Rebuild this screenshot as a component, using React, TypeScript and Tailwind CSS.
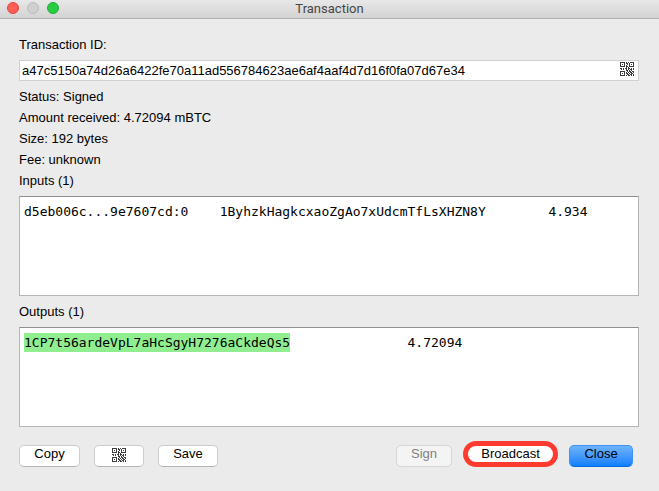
import type { ReactNode } from "react";

interface TxDetails {
  id: string;
  info: string[];
  inputs: { prevout: string; address: string; value: string }[];
  outputs: { address: string; value: string; isMine: boolean }[];
}

const TX: TxDetails = {
  id: "a47c5150a74d26a6422fe70a11ad556784623ae6af4aaf4d7d16f0fa07d67e34",
  info: ["Status: Signed", "Amount received: 4.72094 mBTC", "Size: 192 bytes", "Fee: unknown"],
  inputs: [{ prevout: "d5eb006c...9e7607cd:0", address: "1ByhzkHagkcxaoZgAo7xUdcmTfLsXHZN8Y", value: "4.934" }],
  outputs: [{ address: "1CP7t56ardeVpL7aHcSgyH7276aCkdeQs5", value: "4.72094", isMine: true }],
};

const QR_ROWS = [
  "#####.#.#.####",
  "#...#.##.#...#",
  "#.#.#..#.#.#.#",
  "#...#.#..#...#",
  "#####.##.#####",
  "......#.#.....",
  "##.#.##.##.#.#",
  ".#.#..#.#.##.#",
  "......##.#.#..",
  "#####..#.##.##",
  "#...#.#.#.##.#",
  "#.#.#.##.#.##.",
  "#...#..##.##.#",
  "#####.#.##.#.#",
];

const QrIcon = () => (
  <svg viewBox="0 0 14 14" className="h-3.5 w-3.5" shapeRendering="crispEdges" aria-hidden="true">
    {QR_ROWS.flatMap((row, y) =>
      [...row].map((c, x) => c === "#" && <rect key={`${x}-${y}`} x={x} y={y} width="1" height="1" fill="#3c3c3c" />)
    )}
  </svg>
);

const BUTTON = "flex h-[22px] items-center justify-center rounded-[5px] border leading-4";
const PLAIN = "border-[#cdcdcd] border-b-[#b4b4b4] bg-white";

const TextPane = ({ label, children }: { label: string; children: ReactNode }) => (
  <section>
    <h2 className="leading-[21px]">{label}</h2>
    <div
      role="textbox"
      aria-label={label}
      aria-multiline="true"
      aria-readonly="true"
      className="mt-[5px] h-[100px] overflow-auto border border-[#b5b5b5] border-t-[#8f8f8f] bg-white px-1 py-[5px] font-['DejaVu_Sans_Mono',monospace] leading-[19px] whitespace-pre"
    >
      {children}
    </div>
  </section>
);

export default function App() {
  return (
    <div className="flex min-h-screen flex-col bg-[#ebebeb] font-['Liberation_Sans',Arial,sans-serif] text-[13px] text-black">
      {/* Title bar */}
      <header className="grid h-[19px] grid-cols-[1fr_auto_1fr] items-center border-b border-[#b1b1b1] bg-linear-to-b from-[#e8e8e8] to-[#d3d3d3]">
        <div className="flex gap-2 pb-[3px] pl-[7px]">
          <button aria-label="Close window" className="h-3 w-3 rounded-full border border-[#e2463f] bg-[#ff5f57]" />
          <button aria-label="Minimize window" disabled className="h-3 w-3 rounded-full border border-[#bcbcbc] bg-[#d0d0d0]" />
          <button aria-label="Zoom window" className="h-3 w-3 rounded-full border border-[#1fae33] bg-[#28cd41]" />
        </div>
        <h1 className="font-[Roboto,sans-serif] leading-4 text-[#464646]">Transaction</h1>
      </header>

      <main className="flex flex-col gap-[5px] px-5 pt-[15px] pb-6 pl-[19px]">
        <label htmlFor="txid" className="leading-[21px]">Transaction ID:</label>
        <div className="flex h-[21px] items-center border border-[#d0d0d0] bg-white pr-1">
          <input id="txid" readOnly value={TX.id} className="min-w-0 flex-1 px-0.5 leading-4 outline-none" />
          <button aria-label="Show transaction as QR code" className="pb-1">
            <QrIcon />
          </button>
        </div>

        <div>
          {TX.info.map(line => (
            <p key={line} className="leading-[21px]">{line}</p>
          ))}
          <TextPane label={`Inputs (${TX.inputs.length})`}>
            {TX.inputs.map(i => (
              <div key={i.prevout}>{`${i.prevout}    ${i.address}        ${i.value}`}</div>
            ))}
          </TextPane>
        </div>

        <TextPane label={`Outputs (${TX.outputs.length})`}>
          {TX.outputs.map(o => (
            <div key={o.address}>
              <span className={o.isMine ? "inline-block bg-[#90ee90]" : ""}>{o.address}</span>
              {`               ${o.value}`}
            </div>
          ))}
        </TextPane>

        {/* Actions */}
        <footer className="flex items-end justify-between pt-[9px] pr-1.5">
          <div className="flex gap-3.5">
            <button className={`${BUTTON} ${PLAIN} w-[61px] pb-1`}>Copy</button>
            <button aria-label="Show QR code" className={`${BUTTON} ${PLAIN} w-[50px] pb-0.5`}>
              <QrIcon />
            </button>
            <button className={`${BUTTON} ${PLAIN} w-[60px] pb-1`}>Save</button>
          </div>
          <div className="flex items-end gap-[11px]">
            <button disabled className={`${BUTTON} w-14 border-[#d5d5d5] bg-[#f4f4f4] pb-1 text-[#808080]`}>Sign</button>
            <button className="flex h-[26px] w-[95px] items-center justify-center rounded-full border-[5px] border-[#ff3b30] bg-white leading-4">Broadcast</button>
            <button className={`${BUTTON} w-16 border-[#3d93f5] border-b-[#0a6be0] bg-linear-to-b from-[#6cb3fa] to-[#087eff] pb-1`}>Close</button>
          </div>
        </footer>
      </main>
    </div>
  );
}
